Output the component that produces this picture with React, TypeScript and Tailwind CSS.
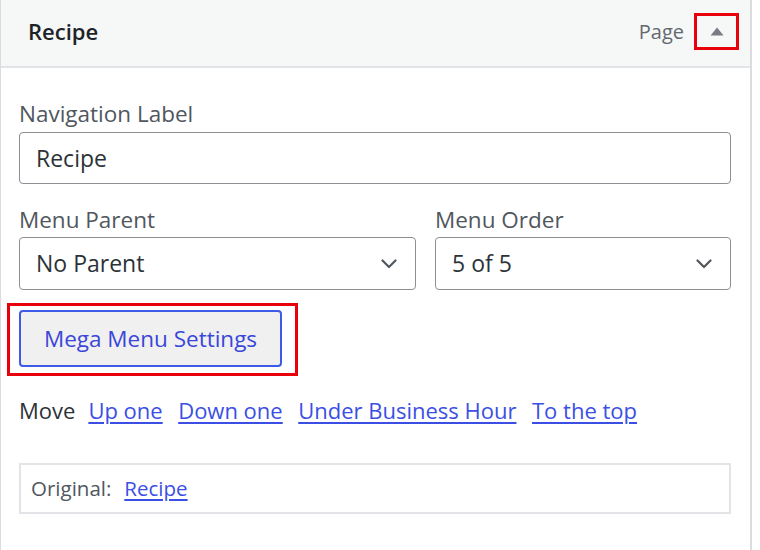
import { useState } from 'react'

const font = { fontFamily: '"Open Sans", "Noto Sans", sans-serif' }

const Chevron = () => (
  <svg width="16" height="10" viewBox="0 0 16 10" className="shrink-0">
    <path d="M1.5 1.5 L8 8 L14.5 1.5" fill="none" stroke="#50575e" strokeWidth="2.2" strokeLinecap="round" strokeLinejoin="round" />
  </svg>
)

const SelectBox = ({ value }: { value: string }) => (
  <div className="h-[53px] flex items-center justify-between pl-[16px] pr-[18px] border border-[#8c8f94] rounded-[4px] bg-white text-[23px] text-[#2c3338]">
    <span>{value}</span>
    <Chevron />
  </div>
)

export default function App() {
  const [open, setOpen] = useState(true)
  const moves = ['Up one', 'Down one', 'Under Business Hour', 'To the top']

  return (
    <div style={font} className="w-[752px] h-[550px] overflow-hidden bg-white border-l border-r-2 border-[#dcdcde]">
      {/* Item header */}
      <div className="h-[68px] flex items-center justify-between pl-[27px] pr-[11px] pb-[3px] bg-[#f6f7f7] border-b-2 border-[#e2e4e7]">
        <h3 className="text-[22px] font-semibold text-[#1d2327]">Recipe</h3>
        <div className="flex items-center">
          <span className="text-[20px] text-[#646970]">Page</span>
          <button
            onClick={() => setOpen(!open)}
            className="ml-[10px] w-[45px] h-[37px] flex items-center justify-center border-[3px] border-[#e8000b]"
          >
            <svg width="14" height="9" viewBox="0 0 14 9">
              <path d="M7 0.5 L13.5 8.5 L0.5 8.5 Z" fill="#787c82" />
            </svg>
          </button>
        </div>
      </div>

      {/* Item settings */}
      <div className="pl-[18px] pr-[19px] pt-[32px]">
        <label className="block text-[22.5px] leading-[28px] text-[#50575e]">Navigation Label</label>
        <div className="mt-[4px] h-[52px] flex items-center pl-[16px] border border-[#8c8f94] rounded-[4px] text-[23px] text-[#2c3338]">
          Recipe
        </div>

        <div className="mt-[22px] grid grid-cols-[397px_1fr] gap-x-[19px]">
          <div>
            <label className="block text-[22.5px] leading-[28px] text-[#50575e]">Menu Parent</label>
            <div className="mt-[3px]">
              <SelectBox value="No Parent" />
            </div>
          </div>
          <div>
            <label className="block text-[22.5px] leading-[28px] text-[#50575e]">Menu Order</label>
            <div className="mt-[3px]">
              <SelectBox value="5 of 5" />
            </div>
          </div>
        </div>

        <div className="mt-[20px] relative w-[263px]">
          <button className="w-[263px] h-[57px] bg-[#f0f0f1] border-2 border-[#3d5be6] rounded-[4px] text-[22.5px] text-[#3a47d8]">
            Mega Menu Settings
          </button>
          <div className="absolute -left-[12px] -top-[7px] w-[291px] h-[73px] border-[3px] border-[#e8000b] pointer-events-none" />
        </div>

        <div className="mt-[29px] flex items-center gap-[13px] text-[22px] leading-[28px]">
          <span className="text-[#2c3338]">Move</span>
          <div className="flex items-center gap-[15.5px]">
            {moves.map((m) => (
              <a key={m} href="#" className="text-[#3b4fe4] underline underline-offset-[3px]">
                {m}
              </a>
            ))}
          </div>
        </div>

        <div className="mt-[39px] h-[51px] flex items-center pl-[10px] border-2 border-[#e2e4e7] text-[20.5px]">
          <span className="text-[#50575e]">Original:</span>
          <a href="#" className="ml-[13px] text-[#3b4fe4] underline underline-offset-[3px]">
            Recipe
          </a>
        </div>
      </div>
    </div>
  )
}
